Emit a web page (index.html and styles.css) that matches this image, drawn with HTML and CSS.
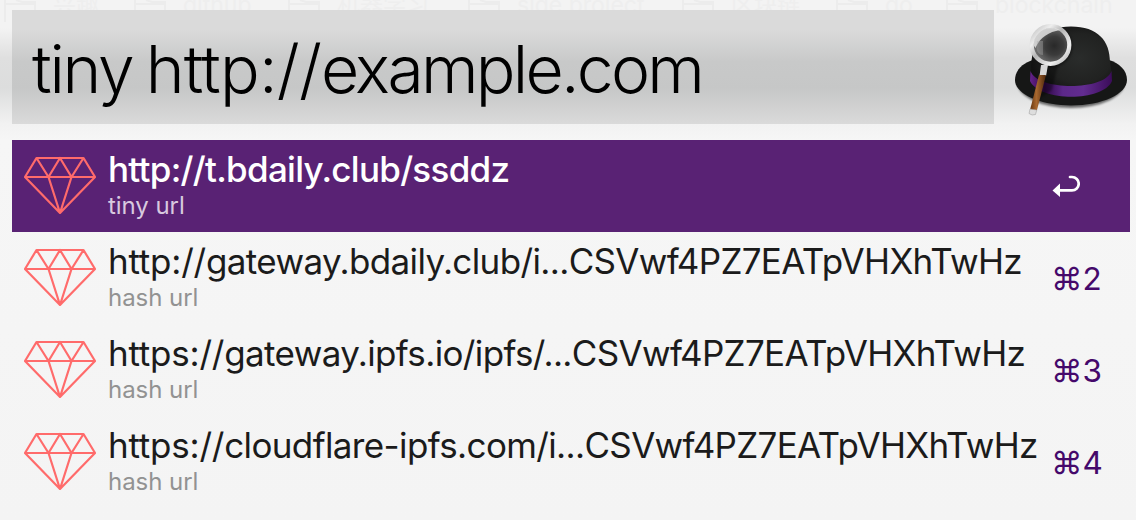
FILE: index.html
```html
<!DOCTYPE html>
<html lang="en">
<head>
<meta charset="utf-8">
<title>Launcher</title>
<link rel="stylesheet" href="styles.css">
</head>
<body>
<svg class="defs" aria-hidden="true">
  <symbol id="gem" viewBox="0 0 72 58">
    <path d="M12.500 2H59.500L71 21L36 57L1 21ZM1 21H71M12.500 2L24.500 21L36 2L47.500 21L59.500 2M24.500 21L36 57L47.500 21" fill="none" stroke="#ff6b6b" stroke-width="2.200" stroke-linejoin="round"/>
  </symbol>
  <symbol id="folder" viewBox="0 0 32 22">
    <path d="M1 22V0M1 4H31M12 0L18 2H31V12" fill="none" stroke="#ececec" stroke-width="2"/>
  </symbol>
</svg>
<main class="launcher">
  <div class="backdrop" aria-hidden="true">
    <span class="mark m1"><svg class="folder"><use href="#folder"/></svg>兴趣</span>
    <span class="mark m2"><svg class="folder"><use href="#folder"/></svg>github</span>
    <span class="mark m3"><svg class="folder"><use href="#folder"/></svg>机器学习</span>
    <span class="mark m4"><svg class="folder"><use href="#folder"/></svg>side project</span>
    <span class="mark m5"><svg class="folder"><use href="#folder"/></svg>区块链</span>
    <span class="mark m6"><svg class="folder"><use href="#folder"/></svg>go</span>
    <span class="mark m7"><svg class="folder"><use href="#folder"/></svg>blockchain</span>
  </div>
  <header class="search">
    <div class="query"><span class="query-text">tiny <span class="protocol">http://</span><span class="host">example.com</span></span></div>
    <svg class="hat" viewBox="0 0 136 120">
      <defs>
        <radialGradient id="crown" cx=".6" cy=".5" r=".6"><stop offset="0" stop-color="#2a2c2b"/><stop offset=".65" stop-color="#212221"/><stop offset="1" stop-color="#121212"/></radialGradient>
        <linearGradient id="band"><stop offset="0" stop-color="#65228c"/><stop offset=".18" stop-color="#300847"/><stop offset=".4" stop-color="#5c2889"/><stop offset=".65" stop-color="#622c90"/><stop offset="1" stop-color="#3b0c59"/></linearGradient>
        <linearGradient id="rim" x1="0" y1="0" x2="1" y2="1"><stop offset="0" stop-color="#bbb"/><stop offset=".25" stop-color="#eee"/><stop offset=".45" stop-color="#b5b5b5"/><stop offset=".75" stop-color="#f0f0f0"/><stop offset="1" stop-color="#aaa"/></linearGradient>
        <radialGradient id="lens" cx=".6" cy=".52" r=".5"><stop offset="0" stop-color="#292929"/><stop offset=".5" stop-color="#3b3b3b"/><stop offset="1" stop-color="#6c6c6c"/></radialGradient>
        <linearGradient id="wood"><stop offset="0" stop-color="#65350f"/><stop offset=".4" stop-color="#a8682f"/><stop offset="1" stop-color="#4d270c"/></linearGradient>
        <filter id="soft" x="-20%" y="-20%" width="140%" height="150%"><feGaussianBlur stdDeviation="1.2"/></filter>
      </defs>
      <ellipse cx="71" cy="72" rx="54" ry="26" fill="#000" opacity=".55" filter="url(#soft)"/>
      <path d="M15 70C15 60 23 53 33 50H109C119 53 127 60 127 70C127 84 102 95.500 71 95.500C40 95.500 15 84 15 70Z" fill="#161716"/>
      <path d="M31 62C31 30 43 16.500 71 16.500C98 16.500 110 31 110 52L111.500 62C111 86 31 86 31 62Z" fill="url(#crown)"/>
      <path d="M30.500 61C37 81 105 81 111.500 61L112 71C103 92 40 92 30 71Z" fill="url(#band)"/>
      <path d="M46 55L58 55L52 80L39 89Z" fill="#000" opacity=".35" filter="url(#soft)"/>
      <circle cx="52" cy="36.500" r="20.500" fill="#000" opacity=".4" filter="url(#soft)"/>
      <circle cx="50.500" cy="35" r="18.800" fill="url(#lens)" stroke="url(#rim)" stroke-width="4.200"/>
      <path d="M33.500 35C33 20 48 14 60 20C49 22 40 27 35.500 38Z" fill="#e2e2e2" opacity=".85"/>
      <path d="M37 31H43V45Q38 45 36.500 39Z" fill="#aaa" opacity=".4"/>
      <path d="M41 55H48L46 66H39.500Z" fill="#d6d6d6"/>
      <path d="M39 65H46L37 100H30Z" fill="url(#wood)"/>
      <path d="M30 99L36.800 100L35.500 104.500Q32 106 29 103.500Z" fill="#ddd" stroke="#999" stroke-width=".5"/>
    </svg>
  </header>
  <ul class="results">
    <li class="row selected">
      <svg class="gem"><use href="#gem"/></svg>
      <div class="copy"><div class="title">http://t.bdaily.club/ssddz</div><div class="sub">tiny url</div></div>
      <div class="key"><svg class="enter" viewBox="0 0 28 22"><path d="M18 2H20A6.700 6.700 0 0 1 20 15.400H7" fill="none" stroke="#fff" stroke-width="2.700" stroke-linecap="round"/><path d="M.5 15.400L8 8.500V22Z" fill="#fff"/></svg></div>
    </li>
    <li class="row">
      <svg class="gem"><use href="#gem"/></svg>
      <div class="copy"><div class="title"><span class="scheme">http://</span>gateway.bdaily.club/i...<span class="hash">CSVwf4PZ7EATpVHXhTwHz</span></div><div class="sub">hash url</div></div>
      <div class="key">⌘2</div>
    </li>
    <li class="row">
      <svg class="gem"><use href="#gem"/></svg>
      <div class="copy"><div class="title"><span class="scheme">https://</span>gateway.ipfs.io/ipfs/...<span class="hash">CSVwf4PZ7EATpVHXhTwHz</span></div><div class="sub">hash url</div></div>
      <div class="key">⌘3</div>
    </li>
    <li class="row">
      <svg class="gem"><use href="#gem"/></svg>
      <div class="copy"><div class="title"><span class="scheme">https://</span>cloudflare-ipfs.com/i...<span class="hash">CSVwf4PZ7EATpVHXhTwHz</span></div><div class="sub">hash url</div></div>
      <div class="key">⌘4</div>
    </li>
  </ul>
</main>
</body>
</html>
```
FILE: styles.css
```css
* { box-sizing: border-box; }
body { margin: 0; font-family: Inter, "Liberation Sans", "Noto Sans CJK SC", sans-serif; font-feature-settings: "calt" 0, "liga" 0; }
.defs { display: none; }
.launcher {
  position: relative;
  width: 1136px;
  height: 520px;
  padding: 10px 0 0 12px;
  overflow: hidden;
  background: linear-gradient(#f3f3f3 0, #f3f3f3 28px, #dfdfdf 58px, #dcdddd 88px, #f2f2f2 124px, #f6f6f6 140px, #f4f4f4 100%);
}
/* Faint window content showing through the translucent panel */
.backdrop { position: absolute; left: 0; top: 0; width: 1136px; height: 14px; }
.mark { position: absolute; top: -9px; display: flex; gap: 17px; font-size: 23px; line-height: 28px; color: #eee; white-space: nowrap; }
.folder { width: 32px; height: 22px; margin-top: 9px; }
.m1 { left: 4px; }
.m2 { left: 134px; }
.m3 { left: 288px; }
.m4 { left: 468px; }
.m5 { left: 682px; }
.m6 { left: 836px; }
.m7 { left: 946px; }
.search { position: relative; display: flex; height: 114px; }
.query { width: 982px; height: 114px; padding-left: 20px; background: linear-gradient(#dadada 0, #dadada 20px, #c8c9c9 52px, #c6c7c7 78px, #dadada 114px); }
.query-text { font-size: 66px; line-height: 118px; font-weight: 340; letter-spacing: -2.3px; word-spacing: -3px; color: #000; white-space: nowrap; }
.protocol { letter-spacing: -.8px; }
.host { letter-spacing: -2.75px; }
.hat { width: 136px; height: 120px; margin-left: 6px; flex: none; }
.results { list-style: none; margin: 16px 0 0; padding: 0; width: 1118px; }
.row { display: flex; height: 92px; color: #1b1b1b; }
.gem { width: 72px; height: 58px; margin: 16px 0 0 12px; flex: none; }
.copy { width: 943px; margin-left: 12px; flex: none; }
.title { height: 50px; font-size: 35px; line-height: 59px; font-weight: 425; letter-spacing: -.63px; white-space: nowrap; }
.scheme { letter-spacing: -.22px; }
.hash { letter-spacing: -.68px; }
.sub { font-size: 24px; line-height: 32px; letter-spacing: -.05px; color: #929292; }
.key { display: flex; align-items: center; height: 92px; font-size: 31.5px; font-weight: 420; color: #45096b; white-space: nowrap; }
.enter { width: 28px; height: 22px; margin-left: 1px; }
.selected { background: #592274; color: #fff; }
.selected .title { font-weight: 480; letter-spacing: -.72px; }
.selected .sub { color: #d8c9df; }
```
